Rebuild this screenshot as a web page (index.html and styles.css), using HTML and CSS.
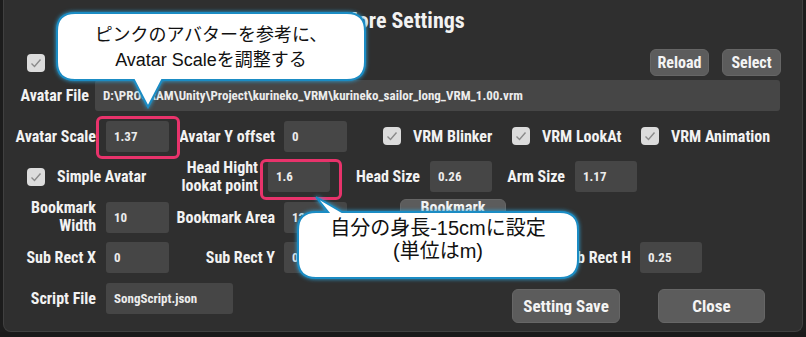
FILE: index.html
```html
<!DOCTYPE html>
<html lang="ja">
<head>
  <meta charset="UTF-8">
  <title>More Settings</title>
  <link rel="stylesheet" href="styles.css">
</head>
<body>
  <div class="panel">
    <div class="title">More Settings</div>

    <div class="row row-top">
      <div class="check-item">
        <span class="check"><svg viewBox="0 0 18 18"><polyline points="4.5,9.5 7.5,12.5 13.5,5.5"/></svg></span>
        <span class="lbl">Auto Load</span>
      </div>
      <div class="top-btns">
        <button class="btn">Reload</button>
        <button class="btn">Select</button>
      </div>
    </div>

    <div class="rows">
      <div class="row">
        <div class="lbl file-lbl">Avatar File</div>
        <div class="field path">D:\PROGRAM\Unity\Project\kurineko_VRM\kurineko_sailor_long_VRM_1.00.vrm</div>
      </div>

      <div class="row">
        <div class="lbl c1">Avatar Scale</div>
        <div class="field f1">1.37</div>
        <div class="lbl c2">Avatar Y offset</div>
        <div class="field f2">0</div>
        <div class="check-item ci-blink">
          <span class="check"><svg viewBox="0 0 18 18"><polyline points="4.5,9.5 7.5,12.5 13.5,5.5"/></svg></span>
          <span class="lbl">VRM Blinker</span>
        </div>
        <div class="check-item ci-look">
          <span class="check"><svg viewBox="0 0 18 18"><polyline points="4.5,9.5 7.5,12.5 13.5,5.5"/></svg></span>
          <span class="lbl">VRM LookAt</span>
        </div>
        <div class="check-item">
          <span class="check"><svg viewBox="0 0 18 18"><polyline points="4.5,9.5 7.5,12.5 13.5,5.5"/></svg></span>
          <span class="lbl">VRM Animation</span>
        </div>
      </div>

      <div class="row">
        <div class="check-item ci-simple">
          <span class="check"><svg viewBox="0 0 18 18"><polyline points="4.5,9.5 7.5,12.5 13.5,5.5"/></svg></span>
          <span class="lbl">Simple Avatar</span>
        </div>
        <div class="lbl two head-lbl">Head Hight<br>lookat point</div>
        <div class="field f3">1.6</div>
        <div class="lbl hs-lbl">Head Size</div>
        <div class="field f3">0.26</div>
        <div class="lbl arm-lbl">Arm Size</div>
        <div class="field f3">1.17</div>
      </div>

      <div class="row">
        <div class="lbl two c1">Bookmark<br>Width</div>
        <div class="field f1">10</div>
        <div class="lbl c2">Bookmark Area</div>
        <div class="field f2">12</div>
        <button class="btn bm-btn">Bookmark<br>Edit</button>
      </div>

      <div class="row">
        <div class="lbl c1">Sub Rect X</div>
        <div class="field f1">0</div>
        <div class="lbl c2">Sub Rect Y</div>
        <div class="field f2">0</div>
        <div class="lbl sw-lbl">Sub Rect W</div>
        <div class="field f3">1</div>
        <div class="lbl sh-lbl">Sub Rect H</div>
        <div class="field f3">0.25</div>
      </div>

      <div class="row row-last">
        <div class="lbl c1">Script File</div>
        <div class="field script">SongScript.json</div>
        <button class="btn big save-btn">Setting Save</button>
        <button class="btn big close-btn">Close</button>
      </div>
    </div>
  </div>
  <div class="bottom-strip"></div>

  <!-- 注釈 -->
  <div class="mark mark-scale"></div>
  <div class="mark mark-head"></div>

  <div class="callout callout-1">
    <svg class="bubble" width="320" height="104" viewBox="0 0 320 104">
      <path d="M23 5 H295 Q313 5 313 23 V54 Q313 72 295 72 H110 L96 99 L82 72 H23 Q5 72 5 54 V23 Q5 5 23 5 Z"/>
    </svg>
    <div class="callout-text">ピンクのアバターを参考に、<br>Avatar Scaleを調整する</div>
  </div>

  <div class="callout callout-2">
    <svg class="bubble" width="296" height="92" viewBox="0 0 296 92">
      <path d="M26 2 L52 17 H110 H270 Q288 17 288 35 V65 Q288 83 270 83 H26 Q8 83 8 65 V35 Q8 17 26 17 H38 Z"/>
    </svg>
    <div class="callout-text">自分の身長-15cmに設定<br>(単位はm)</div>
  </div>
</body>
</html>
```

FILE: styles.css
```css
body { margin: 0; width: 806px; height: 337px; overflow: hidden; background: #1c1c1c; position: relative; font-family: "Roboto Condensed", "DejaVu Sans Condensed", sans-serif; font-weight: bold; color: #f2f2f2; }
.panel { margin: 0 3px; height: 332px; box-sizing: border-box; background: #2f2f2f; border: 1px solid #404040; border-top: none; border-radius: 0 0 8px 8px; }
.title { height: 49px; text-align: center; font-size: 22px; line-height: 42px; }
.row { display: flex; align-items: center; height: 31px; }
.rows { display: flex; flex-direction: column; gap: 9.5px; margin-top: 4px; }
.lbl { font-size: 16px; white-space: nowrap; flex: none; }
.lbl.two { line-height: 18px; }
.c1, .c2, .head-lbl, .hs-lbl, .arm-lbl, .sw-lbl, .sh-lbl, .file-lbl { text-align: right; }
.c1 { width: 92px; }
.c2 { width: 106px; }
.file-lbl { width: 85px; }
.field { flex: none; height: 31px; box-sizing: border-box; background: #464646; border-radius: 3px; padding-left: 8px; font-size: 13px; line-height: 31px; color: #ececec; margin-left: 10px; white-space: nowrap; overflow: hidden; }
.f1 { width: 63px; }
.f2 { width: 63px; margin-left: 9px; }
.f3 { width: 62px; }
.path { flex: 1; margin-left: 6px; margin-right: 22px; }
.script { width: 127px; }

.row-top { height: 27px; justify-content: space-between; }
.check-item { display: flex; align-items: center; gap: 12px; flex: none; }
.row-top .check-item { margin-left: 23px; }
.check { width: 18px; height: 18px; border-radius: 4px; background: #dcdcdc; display: flex; }
.check svg { width: 18px; height: 18px; }
.check polyline { fill: none; stroke: #8a8a8a; stroke-width: 1.4; }
.top-btns { display: flex; gap: 13px; margin-right: 21px; }

.btn { font-family: inherit; font-weight: bold; color: #f4f4f4; background: #5c5c5c; border: 1px solid #666; border-radius: 6px; font-size: 16px; width: 59px; height: 27px; padding: 0; white-space: nowrap; }
.big { width: 108px; height: 34px; font-size: 17px; }
.bm-btn { width: 106px; height: 34px; margin-left: 53px; margin-top: -2px; font-size: 16px; line-height: 16px; }
.row-last { align-items: flex-start; }
.row-last .lbl { line-height: 31px; }
.save-btn { margin-left: 279px; margin-top: 6px; }
.close-btn { margin-left: 38px; margin-top: 6px; width: 107px; }

.ci-blink { margin-left: 36px; width: 129px; }
.ci-look { width: 129px; }
.ci-simple { margin-left: 23px; width: 153px; }
.head-lbl { width: 78px; }
.hs-lbl { width: 90px; }
.arm-lbl { width: 73px; }
.sw-lbl { width: 105px; }
.sh-lbl { width: 107px; }
.sh-lbl + .field { margin-left: 9px; }

.bottom-strip { height: 5px; background: #1a1a1a; }

/* 注釈 */
.mark { position: absolute; border: 3px solid #e8336b; border-radius: 6px; box-sizing: border-box; }
.mark-scale { left: 96px; top: 116px; width: 84px; height: 43px; }
.mark-head { left: 260px; top: 159px; width: 82px; height: 41px; }
.callout { position: absolute; }
.callout-1 { left: 52px; top: 8px; width: 320px; height: 104px; }
.callout-2 { left: 290px; top: 195px; width: 296px; height: 92px; }
.bubble { position: absolute; left: 0; top: 0; filter: drop-shadow(0 0 2px #2aa6df); }
.bubble path { fill: #fff; stroke: #1b8cc4; stroke-width: 2; }
.callout-text { position: relative; color: #111; font-family: "Liberation Sans", "Noto Sans CJK JP", sans-serif; font-weight: normal; font-size: 18px; line-height: 25px; text-align: center; }
.callout-1 .callout-text { padding-top: 15px; width: 318px; }
.callout-2 .callout-text { padding-top: 22px; width: 296px; font-size: 20px; line-height: 23px; }
```
